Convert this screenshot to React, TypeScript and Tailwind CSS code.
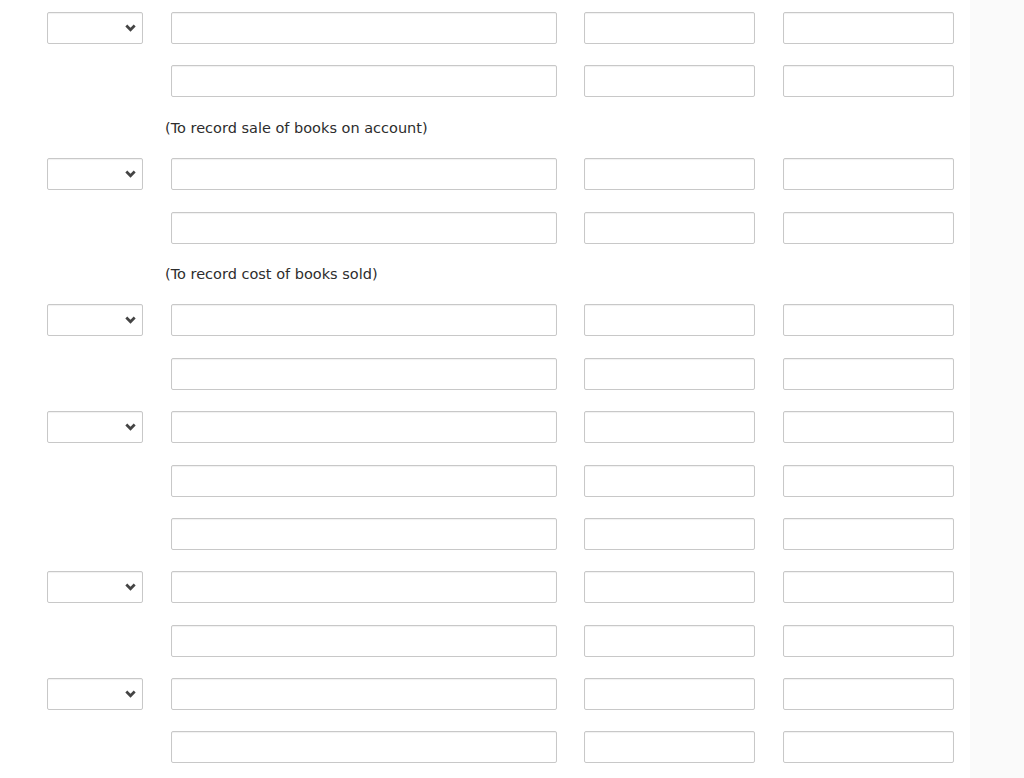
import React from 'react';

type Row = { kind: 'entry'; select?: boolean } | { kind: 'note'; text: string };

const rows: Row[] = [
  { kind: 'entry', select: true },
  { kind: 'entry' },
  { kind: 'note', text: '(To record sale of books on account)' },
  { kind: 'entry', select: true },
  { kind: 'entry' },
  { kind: 'note', text: '(To record cost of books sold)' },
  { kind: 'entry', select: true },
  { kind: 'entry' },
  { kind: 'entry', select: true },
  { kind: 'entry' },
  { kind: 'entry' },
  { kind: 'entry', select: true },
  { kind: 'entry' },
  { kind: 'entry', select: true },
  { kind: 'entry' },
];

function Chevron() {
  return (
    <svg width="11" height="8" viewBox="0 0 11 8" className="shrink-0">
      <path d="M1.3 1.5 L5.5 5.8 L9.7 1.5" fill="none" stroke="#444" strokeWidth="2.7" />
    </svg>
  );
}

const box =
  'rounded-[2px] border border-[#c8c8c8] bg-white shadow-[inset_0_1px_1px_rgba(0,0,0,0.06)] outline-none';

function EntryRow({ select }: { select?: boolean }) {
  return (
    <div className="flex h-[32px] items-stretch">
      <div className="w-[96px] shrink-0">
        {select && (
          <div className={`flex h-full items-center justify-end pr-[6px] ${box}`}>
            <Chevron />
          </div>
        )}
      </div>
      <input className={`ml-[28px] w-[386px] ${box}`} />
      <input className={`ml-[27px] w-[171px] ${box}`} />
      <input className={`ml-[28px] w-[171px] ${box}`} />
    </div>
  );
}

export default function App() {
  return (
    <div className="flex h-[778px] w-[1024px] overflow-hidden bg-white">
      <div className="w-[970px] shrink-0 pl-[47px] pt-[12px]">
        <div className="flex flex-col gap-y-[21.4px]">
          {rows.map((r, i) =>
            r.kind === 'entry' ? (
              <EntryRow key={i} select={r.select} />
            ) : (
              <div
                key={i}
                className="h-[18px] pl-[118px] text-[14.5px] leading-[18px] text-[#2d2d2d]"
                style={{ fontFamily: '"DejaVu Sans", Verdana, sans-serif' }}
              >
                {r.text}
              </div>
            ),
          )}
        </div>
      </div>
      <div className="flex-1 bg-[#fafafa]" />
    </div>
  );
}
